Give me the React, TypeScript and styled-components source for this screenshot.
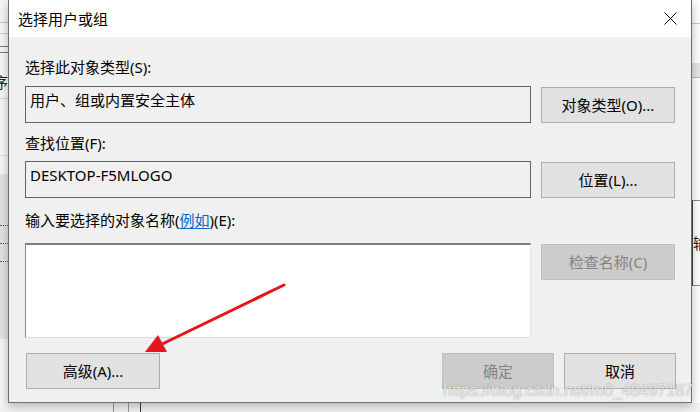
import styled, { createGlobalStyle } from 'styled-components'

const GlobalStyle = createGlobalStyle`
  html, body {
    margin: 0;
    padding: 0;
    background: #ffffff;
    overflow: hidden;
  }
  body {
    font-family: "Noto Sans", "Noto Sans CJK SC", "Liberation Sans", sans-serif;
  }
`

const Screen = styled.div`
  position: relative;
  width: 700px;
  height: 412px;
  overflow: hidden;
  display: grid;
  grid-template-columns: 8px 684px 8px;
  grid-template-rows: 403px 9px;
  background: #ffffff;
`

const LeftStrip = styled.div`
  grid-column: 1;
  grid-row: 1;
  display: flex;
  flex-direction: column;
  overflow: hidden;
  background: #f7f7f7;
`

const RightStrip = styled.div`
  grid-column: 3;
  grid-row: 1;
  display: flex;
  flex-direction: column;
  overflow: hidden;
  background: #ffffff;
`

const BottomStrip = styled.div`
  grid-column: 1 / span 3;
  grid-row: 2;
  display: flex;
  background: #f3f3f3;
`

const HLine = styled.div<{ $top: number; $color?: string; $h?: number }>`
  flex: none;
  margin-top: ${p => p.$top}px;
  height: ${p => p.$h ?? 1}px;
  background: ${p => p.$color ?? '#cfcfcf'};
`

const GrayPanel = styled.div`
  flex: none;
  margin-top: 18px;
  height: 165px;
  background: #e4e4e4;
  display: flex;
  flex-direction: column;
  align-items: flex-end;
  padding-top: 48px;
  gap: 14px;
  box-sizing: border-box;
`

const Squiggle = styled.div`
  width: 8px;
  height: 3px;
  border-bottom: 1px dotted #e0242c;
`

const ClipGlyph = styled.div<{ $top: number; $align: 'left' | 'right' }>`
  flex: none;
  margin-top: ${p => p.$top}px;
  height: 18px;
  font-family: "Noto Sans CJK SC", sans-serif;
  font-size: 15px;
  line-height: 18px;
  color: #222;
  white-space: nowrap;
  display: flex;
  justify-content: ${p => (p.$align === 'right' ? 'flex-end' : 'flex-start')};
`

const SideFrame = styled.div`
  flex: none;
  margin-top: 122px;
  height: 84px;
  border-top: 1px solid #8a8a8a;
  border-bottom: 1px solid #8a8a8a;
  border-left: 1px solid #444;
  display: flex;
  align-items: center;
  overflow: hidden;
`

const VLine = styled.div<{ $left: number; $color: string }>`
  flex: none;
  margin-left: ${p => p.$left}px;
  width: 1px;
  background: ${p => p.$color};
`

const Dialog = styled.div`
  grid-column: 2;
  grid-row: 1;
  z-index: 1;
  display: flex;
  flex-direction: column;
  background: #f0f0f0;
  border: 1px solid #6e6e6e;
  border-top: none;
  box-sizing: border-box;
  box-shadow: 0 3px 10px rgba(0, 0, 0, 0.28);
  color: #000;
  font-size: 15px;
  line-height: 20px;
`

const TitleBar = styled.div`
  height: 37px;
  flex: none;
  background: #ffffff;
  display: flex;
  align-items: center;
  padding-left: 9px;
`

const Title = styled.div`
  flex: 1;
  font-size: 15px;
`

const CloseBox = styled.div`
  width: 42px;
  height: 37px;
  display: flex;
  align-items: center;
  justify-content: center;
`

const Body = styled.div`
  flex: 1;
  display: flex;
  flex-direction: column;
  padding: 0 15px 0 16px;
`

const Label = styled.div<{ $mt: number }>`
  margin-top: ${p => p.$mt}px;
  height: 20px;
  white-space: nowrap;
`

const Link = styled.span`
  color: #0066cc;
  text-decoration: underline;
  text-underline-offset: 2px;
`

const Row = styled.div<{ $mt: number }>`
  margin-top: ${p => p.$mt}px;
  display: flex;
  align-items: flex-start;
  gap: 10px;
`

const ReadBox = styled.div`
  width: 506px;
  height: 37px;
  box-sizing: border-box;
  border: 1px solid #646464;
  background: #f0f0f0;
  padding: 3px 4px;
  white-space: nowrap;
`

const NameArea = styled.div`
  width: 506px;
  height: 95px;
  box-sizing: border-box;
  background: #ffffff;
  border-top: 2px solid #7d7d7d;
  border-left: 1px solid #8a8a8a;
  border-right: 1px solid #e3e3e3;
  border-bottom: 1px solid #dcdcdc;
`

const Button = styled.div<{ $w: number; $disabled?: boolean; $mt?: number }>`
  width: ${p => p.$w}px;
  height: 36px;
  margin-top: ${p => p.$mt ?? 0}px;
  box-sizing: border-box;
  display: flex;
  align-items: center;
  justify-content: center;
  white-space: nowrap;
  background: ${p => (p.$disabled ? '#cccccc' : '#e1e1e1')};
  border: 1px solid ${p => (p.$disabled ? '#bfbfbf' : '#adadad')};
  color: ${p => (p.$disabled ? '#838383' : '#000')};
`

const Footer = styled.div`
  margin-top: 15px;
  display: flex;
  gap: 10px;
  padding-left: 1px;
`

const Spacer = styled.div`
  flex: 1;
`

const Overlay = styled.svg`
  position: absolute;
  left: 0;
  top: 0;
  z-index: 2;
  pointer-events: none;
`

const Watermark = styled.div`
  position: absolute;
  left: 443px;
  top: 381px;
  z-index: 3;
  font-family: "Liberation Sans", Arial, sans-serif;
  font-size: 16px;
  line-height: 20px;
  color: rgba(255, 255, 255, 0.8);
  text-shadow: 0 0 1px rgba(0, 0, 0, 0.35), 0 0 2px rgba(0, 0, 0, 0.15);
  white-space: nowrap;
`

export default function App() {
  return (
    <>
      <GlobalStyle />
      <Screen>
        <LeftStrip>
          <HLine $top={22} $color="#c4c4c4" />
          <HLine $top={10} $color="#d4d4d4" />
          <HLine $top={12} $color="#7a7a7a" />
          <HLine $top={5} $color="#7a7a7a" />
          <ClipGlyph $top={20} $align="right">序</ClipGlyph>
          <HLine $top={7} $color="#d8d8d8" />
          <HLine $top={56} $color="#dddddd" />
          <GrayPanel>
            <Squiggle />
            <Squiggle />
            <Squiggle />
          </GrayPanel>
        </LeftStrip>

        <Dialog>
          <TitleBar>
            <Title>选择用户或组</Title>
            <CloseBox>
              <svg width="13" height="13" viewBox="0 0 13 13">
                <path d="M0.5 0.5 L12.5 12.5 M12.5 0.5 L0.5 12.5" stroke="#000" strokeWidth="1" fill="none" />
              </svg>
            </CloseBox>
          </TitleBar>
          <Body>
            <Label $mt={20}>选择此对象类型(S):</Label>
            <Row $mt={9}>
              <ReadBox>用户、组或内置安全主体</ReadBox>
              <Button $w={134} $mt={1}>对象类型(O)...</Button>
            </Row>
            <Label $mt={10}>查找位置(F):</Label>
            <Row $mt={8}>
              <ReadBox>DESKTOP-F5MLOGO</ReadBox>
              <Button $w={134} $mt={1}>位置(L)...</Button>
            </Row>
            <Label $mt={12}>
              输入要选择的对象名称(<Link>例如</Link>)(E):
            </Label>
            <Row $mt={13}>
              <NameArea />
              <Button $w={134} $mt={1} $disabled>检查名称(C)</Button>
            </Row>
            <Footer>
              <Button $w={134}>高级(A)...</Button>
              <Spacer />
              <Button $w={112} $disabled>确定</Button>
              <Button $w={112}>取消</Button>
            </Footer>
          </Body>
        </Dialog>

        <RightStrip>
          <HLine $top={23} $color="#c8c8c8" />
          <HLine $top={39} $color="#e6e6e6" $h={14} />
          <HLine $top={0} $color="#bcbcbc" />
          <SideFrame>
            <ClipGlyph $top={0} $align="left">输</ClipGlyph>
          </SideFrame>
        </RightStrip>

        <BottomStrip>
          <VLine $left={113} $color="#9a9a9a" />
          <VLine $left={14} $color="#9a9a9a" />
          <VLine $left={11} $color="#333333" />
        </BottomStrip>

        <Overlay width="700" height="412" viewBox="0 0 700 412">
          <line x1="284" y1="285" x2="156" y2="347" stroke="#e8141c" strokeWidth="3" strokeLinecap="round" />
          <polygon points="145,352 158,335 167,352" fill="#e8141c" />
        </Overlay>
        <Watermark>https://blog.csdn.net/m0_48497187</Watermark>
      </Screen>
    </>
  )
}
